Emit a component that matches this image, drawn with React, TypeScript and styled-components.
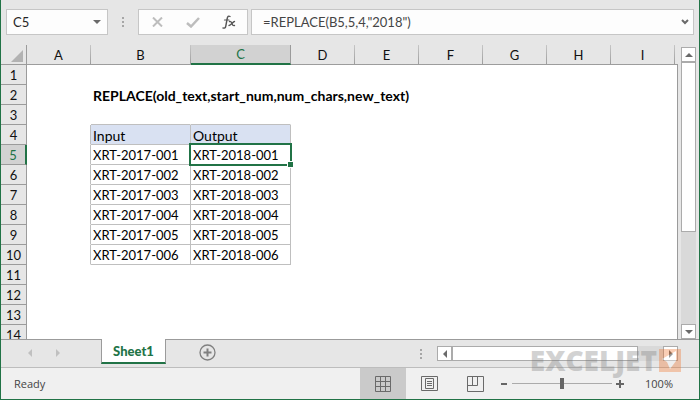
import React, { useState } from "react";
import styled, { createGlobalStyle, css } from "styled-components";

const green = "#217346";
const line = "#9b9b9b";
const boxLine = "#c6c6c6";
const sheetFont = `Lato, "Liberation Sans", sans-serif`;
const uiFont = `"Open Sans", "Noto Sans", sans-serif`;

const GlobalStyle = createGlobalStyle`
  *, *::before, *::after { box-sizing: border-box; }
  body { margin: 0; background: #e6e6e6; font-family: ${sheetFont}; }
  button, input { font: inherit; color: inherit; margin: 0; }
`;

const Window = styled.div`
  display: flex;
  flex-direction: column;
  height: 100vh;
  min-height: 200px;
  border: 1px solid ${green};
  border-top: 0;
  background: #e6e6e6;
  overflow: hidden;
`;

const FormulaBar = styled.header`
  display: flex;
  flex: none;
  height: 45px;
  padding: 9px 5px 10px;
`;

const Box = styled.div<{ $width?: number }>`
  display: flex;
  align-items: center;
  flex: ${(p) => (p.$width ? `0 0 ${p.$width}px` : "1 1 0")};
  min-width: 0;
  border: 1px solid ${boxLine};
  background: #fdfdfd;
`;

const BarInput = styled.input<{ $muted?: boolean }>`
  flex: 1;
  min-width: 0;
  height: 24px;
  padding: 0 0 0 ${(p) => (p.$muted ? 11 : 6)}px;
  border: 0;
  outline: 0;
  background: transparent;
  font-size: 13px;
  color: ${(p) => (p.$muted ? "#444" : "#262626")};
`;

const IconButton = styled.button<{ $width: number }>`
  display: flex;
  align-items: center;
  justify-content: center;
  flex: 0 0 ${(p) => p.$width}px;
  height: 24px;
  padding: 0;
  border: 0;
  background: transparent;
`;

const Grip = styled.div<{ $width: number }>`
  display: flex;
  align-items: center;
  justify-content: center;
  flex: 0 0 ${(p) => p.$width}px;
`;

const Gap = styled.div`
  flex: 0 0 3px;
`;

const Workspace = styled.main`
  display: flex;
  flex: 1 1 0;
  min-height: 0;
`;

const SheetView = styled.div`
  flex: 1;
  min-width: 0;
  overflow: hidden;
`;

const Grid = styled.table`
  width: 100%;
  table-layout: fixed;
  border-collapse: separate;
  border-spacing: 0;
`;

const Col = styled.col<{ $width?: number }>`
  width: ${(p) => (p.$width ? `${p.$width}px` : "auto")};
`;

const Corner = styled.td`
  height: 20px;
  padding: 2px 3px 0 0;
  border-right: 1px solid ${line};
  border-bottom: 1px solid ${line};
  text-align: right;
  line-height: 0;
`;

const ColHead = styled.th<{ $active?: boolean }>`
  height: 20px;
  padding: 0;
  border-right: 1px solid;
  border-image: linear-gradient(#c8c8c8, ${line}) 1;
  border-bottom: 1px solid ${line};
  font-size: 13px;
  font-weight: 400;
  line-height: 18px;
  color: #111;
  ${(p) =>
    p.$active &&
    css`
      border-image: none;
      border-right-color: ${line};
      border-bottom: 2px solid ${green};
      background: #d2d2d2;
      color: ${green};
    `}
`;

const FillHead = styled.td`
  border-bottom: 1px solid ${line};
`;

const SheetRow = styled.tr`
  background: #fff;
`;

const RowHead = styled.th<{ $active?: boolean }>`
  height: 20px;
  padding: 2px 0 0;
  border-bottom: 1px solid ${line};
  border-right: 1px solid ${line};
  background: #e6e6e6;
  font-size: 13px;
  font-weight: 400;
  line-height: 17px;
  color: #111;
  ${(p) =>
    p.$active &&
    css`
      border-right: 2px solid ${green};
      background: #d2d2d2;
      color: ${green};
    `}
`;

const Cell = styled.td<{
  $head?: boolean;
  $boxed?: boolean;
  $bold?: boolean;
  $edgeTop?: boolean;
  $edgeRight?: boolean;
}>`
  position: relative;
  height: 20px;
  padding: 2px 0 0 2px;
  background: ${(p) => (p.$head ? "#d9e1f2" : "transparent")};
  border-right: 1px solid ${(p) => (p.$boxed || p.$edgeRight ? "#bfbfbf" : "transparent")};
  border-bottom: 1px solid ${(p) => (p.$boxed || p.$edgeTop ? "#bfbfbf" : "transparent")};
  font-size: ${(p) => (p.$head || p.$bold ? 14 : 13)}px;
  font-weight: ${(p) => (p.$bold ? 700 : 400)};
  line-height: 17px;
  white-space: nowrap;
  color: #000;
`;

const FillCell = styled.td`
  border-right: 1px solid ${line};
`;

const Selection = styled.div`
  position: absolute;
  inset: -2px;
  border: 2px solid ${green};
  z-index: 1;
  pointer-events: none;
  &::after {
    content: "";
    position: absolute;
    right: -4px;
    bottom: -4px;
    width: 7px;
    height: 7px;
    border: 1px solid #fff;
    background: ${green};
  }
`;

const VScroll = styled.div`
  display: flex;
  flex-direction: column;
  flex: 0 0 15px;
  margin: 2px 3px 0;
`;

const ScrollButton = styled.button`
  display: flex;
  align-items: center;
  justify-content: center;
  flex: 0 0 15px;
  width: 15px;
  height: 15px;
  padding: 0;
  border: 1px solid #ababab;
  background: #fff;
`;

const Track = styled.div<{ $vertical?: boolean }>`
  display: flex;
  flex-direction: ${(p) => (p.$vertical ? "column" : "row")};
  flex: 1;
  min-width: 0;
  min-height: 0;
  background: #d9d9d9;
`;

const Thumb = styled.div<{ $share: number }>`
  flex: 0 0 ${(p) => p.$share}%;
  border: 1px solid #ababab;
  background: #fff;
`;

const TabBar = styled.nav`
  position: relative;
  display: flex;
  flex: 0 0 28px;
  border-top: 1px solid ${line};
`;

const TabArrows = styled.div`
  display: flex;
  flex: 0 0 100px;
  padding: 1px 0 0 15px;
`;

const Tab = styled.button`
  flex: 0 0 65px;
  height: 25px;
  margin-top: -1px;
  padding: 0;
  border: 1px solid ${line};
  border-top: 0;
  border-bottom: 2px solid ${green};
  background: #fff;
  color: ${green};
  font-size: 13px;
  font-weight: 900;
`;

const Spacer = styled.div`
  flex: 1;
`;

const HScroll = styled.div`
  display: flex;
  flex: 0 0 241px;
  height: 15px;
  margin: 6px 21px 0 0;
`;

const Watermark = styled.div`
  position: absolute;
  right: 18px;
  top: 4px;
  display: flex;
  align-items: center;
  gap: 2px;
  height: 32px;
  z-index: 2;
  opacity: 0.32;
  pointer-events: none;
  font: 800 28px/32px ${uiFont};
  color: #777;
`;

const WatermarkLogo = styled.svg`
  align-self: flex-start;
  margin-top: 5px;
`;

const StatusBar = styled.footer`
  display: flex;
  align-items: center;
  flex: 0 0 32px;
  padding: 0 26px 0 13px;
  border-top: 1px solid #bdbdbd;
  background: #f0f0f0;
  font: 11px/16px ${uiFont};
  color: #444;
`;

const ViewButton = styled.button<{ $active?: boolean }>`
  display: flex;
  align-items: center;
  justify-content: center;
  flex: 0 0 46px;
  height: 31px;
  padding: 0;
  border: 0;
  background: ${(p) => (p.$active ? "#cacaca" : "transparent")};
`;

const ZoomButton = styled.button`
  display: flex;
  align-items: center;
  justify-content: center;
  flex: 0 0 12px;
  height: 20px;
  padding: 0;
  border: 0;
  background: transparent;
`;

const ZoomRange = styled.input`
  appearance: none;
  flex: none;
  width: 100px;
  height: 12px;
  margin: 0 2px;
  background: linear-gradient(#ababab, #ababab) center / 100% 1px no-repeat;
  &::-webkit-slider-thumb {
    appearance: none;
    width: 4px;
    height: 11px;
    background: #666;
  }
`;

const ZoomValue = styled.output`
  flex: 0 0 27px;
  margin-left: 19px;
  white-space: nowrap;
`;

const Dots = () => (
  <svg width="2" height="10" fill="#a6a6a6" aria-hidden="true">
    <path d="M0 0h2v2H0zM0 4h2v2H0zM0 8h2v2H0z" />
  </svg>
);

const arrows = {
  up: "M0 4h8L4 0z",
  down: "M0 0h8L4 4z",
  left: "M4 0v8L0 4z",
  right: "M0 0v8l4-4z",
};

const Arrow = ({ dir, color = "#6a6a6a" }: { dir: keyof typeof arrows; color?: string }) => {
  const flat = dir === "up" || dir === "down";
  return (
    <svg width={flat ? 8 : 4} height={flat ? 4 : 8} fill={color} aria-hidden="true">
      <path d={arrows[dir]} />
    </svg>
  );
};

const columns = ["A", "B", "C", "D", "E", "F", "G", "H", "I"];
const widths = [64, 100, 100, 64, 64, 64, 64, 64, 64];

const cells: Record<string, string> = {
  B2: "REPLACE(old_text,start_num,num_chars,new_text)",
  B4: "Input",
  C4: "Output",
};
for (let i = 1; i <= 6; i++) {
  cells[`B${i + 4}`] = `XRT-2017-00${i}`;
  cells[`C${i + 4}`] = `XRT-2018-00${i}`;
}

export default function App() {
  const [name, setName] = useState("C5");
  const [formula, setFormula] = useState('=REPLACE(B5,5,4,"2018")');
  const [zoom, setZoom] = useState(100);

  return (
    <Window>
      <GlobalStyle />
      <FormulaBar>
        <Box $width={102}>
          <BarInput aria-label="Name box" value={name} onChange={(e) => setName(e.target.value)} />
          <IconButton $width={20} aria-label="Show names">
            <Arrow dir="down" />
          </IconButton>
        </Box>
        <Grip $width={30}>
          <Dots />
        </Grip>
        <Box $width={110}>
          <IconButton $width={36} aria-label="Cancel">
            <svg width="11" height="10" fill="none" stroke="#bdbdbd" strokeWidth="2">
              <path d="M1 0.500l9 9M10 0.500l-9 9" />
            </svg>
          </IconButton>
          <IconButton $width={36} aria-label="Enter">
            <svg width="14" height="11" fill="none" stroke="#bdbdbd" strokeWidth="2.500">
              <path d="M1 6l4 3.500L13 1" />
            </svg>
          </IconButton>
          <IconButton $width={36} aria-label="Insert function">
            <svg width="14" height="15" fill="none" stroke="#555" strokeLinecap="round">
              <path strokeWidth="1.400" d="M8 1.500C6.500 .6 5.600 1.500 5.200 3.500L3.800 11C3.500 12.800 2.500 13.500 1 13" />
              <path strokeWidth="1.200" d="M2.500 5h4.500" />
              <path strokeWidth="1.400" d="M7.500 6.500c1.500-.5 2 .5 2.500 2s1 2.500 2.500 2M12.500 6.500c-1.500 0-3.500 4-5.500 4" />
            </svg>
          </IconButton>
        </Box>
        <Gap />
        <Box>
          <BarInput $muted aria-label="Formula" value={formula} onChange={(e) => setFormula(e.target.value)} />
          <IconButton $width={16} aria-label="Expand formula bar">
            <svg width="8" height="6" fill="none" stroke="#6a6a6a" strokeWidth="2">
              <path d="M1 1l3 3 3-3" />
            </svg>
          </IconButton>
        </Box>
      </FormulaBar>

      <Workspace>
        <SheetView>
          <Grid>
            <colgroup>
              <Col $width={26} />
              {columns.map((c, i) => (
                <Col key={c} $width={widths[i]} />
              ))}
              <Col />
            </colgroup>
            <thead>
              <tr>
                <Corner>
                  <svg width="12" height="12" fill="#b2b2b2" aria-hidden="true">
                    <path d="M12 0v12H0z" />
                  </svg>
                </Corner>
                {columns.map((c) => (
                  <ColHead key={c} scope="col" $active={c === "C"}>
                    {c}
                  </ColHead>
                ))}
                <FillHead />
              </tr>
            </thead>
            <tbody>
              {Array.from({ length: 14 }, (_, i) => i + 1).map((r) => (
                <SheetRow key={r}>
                  <RowHead scope="row" $active={r === 5}>
                    {r}
                  </RowHead>
                  {columns.map((c) => {
                    const inTable = r >= 4 && r <= 10;
                    const boxed = inTable && (c === "B" || c === "C");
                    return (
                      <Cell
                        key={c}
                        $boxed={boxed}
                        $head={boxed && r === 4}
                        $bold={r === 2}
                        $edgeTop={r === 3 && (c === "B" || c === "C")}
                        $edgeRight={inTable && c === "A"}
                      >
                        {cells[c + r]}
                        {c + r === "C5" && <Selection />}
                      </Cell>
                    );
                  })}
                  <FillCell />
                </SheetRow>
              ))}
            </tbody>
          </Grid>
        </SheetView>
        <VScroll>
          <ScrollButton aria-label="Scroll up">
            <Arrow dir="up" />
          </ScrollButton>
          <Track $vertical>
            <Thumb $share={65} />
          </Track>
          <ScrollButton aria-label="Scroll down">
            <Arrow dir="down" />
          </ScrollButton>
        </VScroll>
      </Workspace>

      <TabBar>
        <TabArrows>
          <IconButton $width={28} aria-label="Previous sheet">
            <Arrow dir="left" color="#c0c0c0" />
          </IconButton>
          <IconButton $width={28} aria-label="Next sheet">
            <Arrow dir="right" color="#c0c0c0" />
          </IconButton>
        </TabArrows>
        <Tab>Sheet1</Tab>
        <IconButton $width={82} aria-label="New sheet">
          <svg width="17" height="17" fill="none" stroke="#808080">
            <circle cx="8.500" cy="8.500" r="7.500" strokeWidth="1.300" />
            <path strokeWidth="2" d="M8.500 4.500v8M4.500 8.500h8" />
          </svg>
        </IconButton>
        <Spacer />
        <Grip $width={32}>
          <Dots />
        </Grip>
        <HScroll>
          <ScrollButton aria-label="Scroll left">
            <Arrow dir="left" />
          </ScrollButton>
          <Track>
            <Thumb $share={88} />
          </Track>
          <ScrollButton aria-label="Scroll right">
            <Arrow dir="right" />
          </ScrollButton>
        </HScroll>
        <Watermark>
          EXCELJET
          <WatermarkLogo width="22" height="23" aria-hidden="true">
            <path fill="#f26a1b" d="M0 0h22v23H0z" />
            <path fill="#fff" d="M17 2L3 10l5 3 3 7 6-8z" />
          </WatermarkLogo>
        </Watermark>
      </TabBar>

      <StatusBar>
        Ready
        <Spacer />
        <ViewButton $active aria-label="Normal view">
          <svg width="16" height="16" fill="none" stroke="#6a6a6a">
            <path d="M.5.5h15v15H.5zM5.500 0v16M10.500 0v16M0 5.500h16M0 10.500h16" />
          </svg>
        </ViewButton>
        <ViewButton aria-label="Page layout view">
          <svg width="17" height="15" fill="none" stroke="#6a6a6a">
            <path d="M.5.5h16v14H.5zM4.500 2.500h8v10h-8zM6 5.500h5M6 7.500h5M6 9.500h5" />
          </svg>
        </ViewButton>
        <ViewButton aria-label="Page break view">
          <svg width="17" height="16" fill="none" stroke="#6a6a6a">
            <path d="M.5.5h16v15H.5zM5.500 0v9M10.500 0v9.500H0" />
          </svg>
        </ViewButton>
        <ZoomButton aria-label="Zoom out">
          <svg width="6" height="2" fill="#666">
            <path d="M0 0h6v2H0z" />
          </svg>
        </ZoomButton>
        <ZoomRange
          type="range"
          aria-label="Zoom"
          min={10}
          max={190}
          value={zoom}
          onChange={(e) => setZoom(Number(e.target.value))}
        />
        <ZoomButton aria-label="Zoom in">
          <svg width="8" height="8" fill="#666">
            <path d="M3 0h2v3h3v2H5v3H3V5H0V3h3z" />
          </svg>
        </ZoomButton>
        <ZoomValue>{zoom}%</ZoomValue>
      </StatusBar>
    </Window>
  );
}
